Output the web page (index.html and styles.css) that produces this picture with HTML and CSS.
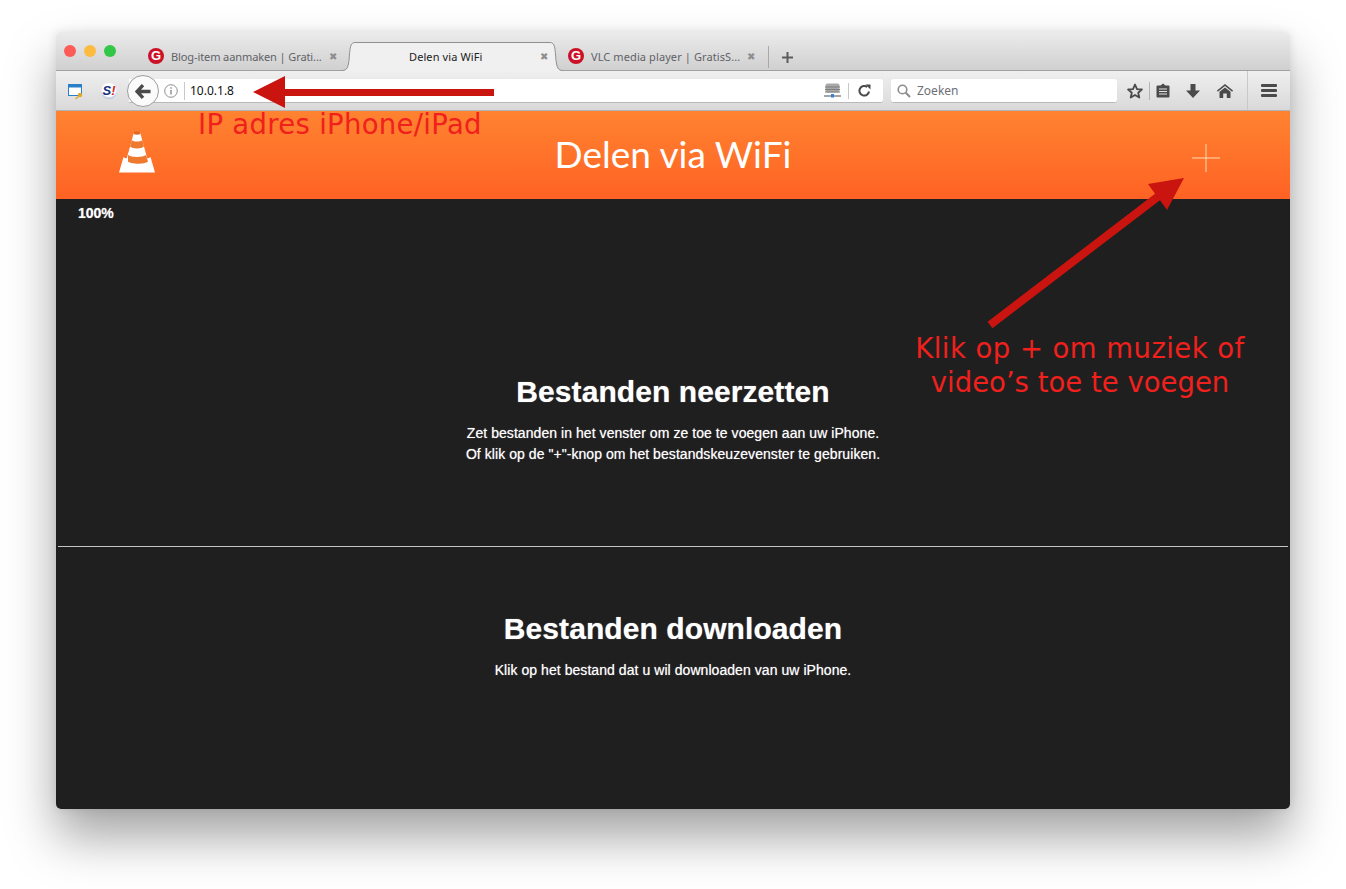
FILE: index.html
```html
<!DOCTYPE html>
<html lang="en">
<head>
  <meta charset="UTF-8">
  <meta name="viewport" content="width=device-width, initial-scale=1.0">
  <title>Delen via WiFi</title>
  <link rel="stylesheet" href="styles.css">
</head>
<body>
  <div class="window">
    <!-- Tabs -->
    <div class="tabbar">
      <div class="traffic">
        <span class="dot red"></span>
        <span class="dot yellow"></span>
        <span class="dot green"></span>
      </div>
      <div class="tab first">
        <span class="favicon">G</span>
        <span class="tab-title">Blog-item aanmaken | Grati...</span>
        <span class="tab-close">&#10006;</span>
      </div>
      <div class="tab active">
        <svg class="tab-curve left" width="13" height="29" viewBox="0 0 13 29"><path d="M0 28.500c5 0 6-3 7-10C8 6 8 .5 13 .5V29H0z" fill="#f0f0f0"/><path d="M0 28.500c5 0 6-3 7-10C8 6 8 .5 13 .5" fill="none" stroke="#8f8f8f"/></svg>
        <span class="tab-title">Delen via WiFi</span>
        <span class="tab-close">&#10006;</span>
        <svg class="tab-curve right" width="13" height="29" viewBox="0 0 13 29"><path d="M13 28.500c-5 0-6-3-7-10C5 6 5 .5 0 .5V29h13z" fill="#f0f0f0"/><path d="M13 28.500c-5 0-6-3-7-10C5 6 5 .5 0 .5" fill="none" stroke="#8f8f8f"/></svg>
      </div>
      <div class="tab third">
        <span class="favicon">G</span>
        <span class="tab-title">VLC media player | GratisS...</span>
        <span class="tab-close">&#10006;</span>
      </div>
      <div class="tab-sep"></div>
      <svg class="new-tab" width="11" height="11" viewBox="0 0 11 11"><path d="M5.500 0v11M0 5.500h11" stroke="#5c5c5c" stroke-width="2"/></svg>
    </div>

    <!-- Navigation -->
    <div class="navbar">
      <svg class="addon" width="16" height="17" viewBox="0 0 16 17">
        <rect x=".5" y="1.500" width="13" height="11" fill="#fff" stroke="#2a7fc9"/>
        <rect x="1" y="2" width="12" height="2.500" fill="#2a7fc9"/>
        <circle cx="12" cy="12" r="2.200" fill="#e0a92e"/>
        <path d="M10.500 13.500L7.500 16" stroke="#e0a92e" stroke-width="1.500"/>
      </svg>
      <span class="addon-s">S<span class="bang">!</span></span>
      <div class="urlbar">
        <div class="back">
          <svg width="16" height="15" viewBox="0 0 16 15"><path d="M8 1.200L2 7.500l6 6.300M2.500 7.500H15.500" fill="none" stroke="#4a4a4a" stroke-width="3.400"/></svg>
        </div>
        <svg class="info" width="14" height="14" viewBox="0 0 14 14"><circle cx="7" cy="7" r="6.300" fill="none" stroke="#8e8e8e"/><path d="M7 6v4.500M7 3.300v1.500" stroke="#808080" stroke-width="1.300"/></svg>
        <span class="url-sep"></span>
        <span class="url-text">10.0.1.8</span>
        <svg class="server" width="17" height="15" viewBox="0 0 17 15">
          <rect x="1.500" y="0.500" width="14" height="9" rx="2" fill="#a9a9a9"/>
          <path d="M1 4h15M1 6.500h15M1 9h15" stroke="#7e7e7e"/>
          <path d="M0 13h17" stroke="#888" stroke-width="1.500"/>
          <rect x="7" y="11" width="3" height="3.500" fill="#3c7fd6"/>
        </svg>
        <span class="url-sep small"></span>
        <svg class="reload" width="13" height="13" viewBox="0 0 13 13"><path d="M11 7.500A4.800 4.800 0 1 1 9.200 3" fill="none" stroke="#4a4a4a" stroke-width="2"/><path d="M7.500 0.500h5v5z" fill="#4a4a4a"/></svg>
      </div>
      <div class="searchbar">
        <svg width="14" height="14" viewBox="0 0 14 14"><circle cx="5.500" cy="5.500" r="4.300" fill="none" stroke="#8c8c8c" stroke-width="1.600"/><path d="M8.800 8.800L13 13" stroke="#8c8c8c" stroke-width="2"/></svg>
        <span>Zoeken</span>
      </div>
      <div class="tools">
        <svg class="star" width="16" height="16" viewBox="0 0 16 16"><path d="M8 1.500l2 4.600 4.900.4-3.700 3.200 1.100 4.800L8 12l-4.300 2.500 1.100-4.800L1.100 6.500 6 6.100z" fill="none" stroke="#4a4a4a" stroke-width="1.800" stroke-linejoin="round"/></svg>
        <span class="tool-sep"></span>
        <svg class="clip" width="14" height="15" viewBox="0 0 14 15"><path d="M1.500 2.500h3L7 .5l2.500 2h3a1 1 0 0 1 1 1v10a1 1 0 0 1-1 1h-11a1 1 0 0 1-1-1v-10a1 1 0 0 1 1-1z" fill="#4a4a4a"/><path d="M3 6h8M3 8.500h8M3 11h8" stroke="#e3e3e3" stroke-width="1.200"/></svg>
        <svg class="down" width="14" height="14" viewBox="0 0 14 14"><path d="M4.500 0h5v6.500H14L7 14 0 6.500h4.500z" fill="#4a4a4a"/></svg>
        <svg class="home" width="16" height="14" viewBox="0 0 16 14"><path d="M8 0l8 6.500-.8 1.200L8 2 .8 7.700 0 6.500z" fill="#4a4a4a"/><path d="M8 3.500l5.500 4.300V14h-3.700V9.500H6.200V14H2.500V7.800z" fill="#4a4a4a"/></svg>
        <span class="menu-sep"></span>
        <div class="menu"><span></span><span></span><span></span></div>
      </div>
    </div>

    <!-- Page -->
    <div class="page-header">
      <svg class="cone" width="36" height="42" viewBox="0 0 36 42">
        <path d="M4.500 26c2 3 25 3 27 0L36 41.500H0z" fill="#fff"/>
        <path d="M15 1h6l8.500 31H6.500z" fill="#fff"/>
        <path d="M15 1Q18-.5 21 1l.5 2Q18 4.500 14.500 3z" fill="#e06a26"/>
        <path d="M12.800 9c2 2 8.400 2 10.400 0l1.800 6.500c-2.500 2.500-11.500 2.500-14 0z" fill="#ee7a30"/>
        <path d="M9 24c3 2.500 15 2.500 18 0l2 6.500c-3 3-17 3-20 0z" fill="#ee7a30"/>
      </svg>
      <h1>Delen via WiFi</h1>
      <svg class="plus" width="28" height="28" viewBox="0 0 28 28"><path d="M14 0v28M0 14h28" stroke="#ffdcb0" stroke-width="1"/></svg>
    </div>
    <div class="page-body">
      <div class="progress">100%</div>
      <section class="upload">
        <h2>Bestanden neerzetten</h2>
        <p>Zet bestanden in het venster om ze toe te voegen aan uw iPhone.<br>Of klik op de "+"-knop om het bestandskeuzevenster te gebruiken.</p>
      </section>
      <hr class="divider">
      <section class="download">
        <h2>Bestanden downloaden</h2>
        <p>Klik op het bestand dat u wil downloaden van uw iPhone.</p>
      </section>
    </div>

    <!-- Annotations drawn on top of the screenshot -->
    <svg class="arrows" width="1234" height="777" viewBox="0 0 1234 777">
      <path d="M438 57H229V44L197 60l32 16V64h209z" fill="#c9140f"/>
      <path d="M931.600 289.800L1099 161.800 1092 152l36-6-17 32-7-9.800L936.400 296.200z" fill="#c9140f"/>
    </svg>
    <div class="note note-ip">IP adres iPhone/iPad</div>
    <div class="note note-plus"><div class="line-one">Klik op + om muziek of</div><div>video’s toe te voegen</div></div>
  </div>
</body>
</html>
```

FILE: styles.css
```css
/* Page */
body {
  margin: 0;
  padding: 32px 56px 0;
  height: 889px;
  box-sizing: border-box;
  overflow: hidden;
  background-color: #ffffff;
  font-family: "Liberation Sans", Arial, sans-serif;
}

.window {
  position: relative;
  width: 1234px;
  height: 777px;
  display: flex;
  flex-direction: column;
  border-radius: 5px;
  box-shadow: 0 28px 50px rgba(0, 0, 0, 0.36), 0 0 10px rgba(0, 0, 0, 0.1);
}

/* Tabs */
.tabbar {
  height: 39px;
  padding-top: 10px;
  box-sizing: border-box;
  display: flex;
  align-items: stretch;
  background: linear-gradient(#ebebeb, #d0d0d0);
  border-bottom: 1px solid #a0a0a0;
  border-radius: 5px 5px 0 0;
  position: relative;
}

.traffic {
  position: absolute;
  left: 8px;
  top: 13px;
  display: flex;
  gap: 8px;
}

.dot {
  width: 12px;
  height: 12px;
  border-radius: 50%;
}

.dot.red { background-color: #fc5b57; }
.dot.yellow { background-color: #fdbb40; }
.dot.green { background-color: #33c748; }

.tab {
  display: flex;
  align-items: center;
  font-size: 11px;
  letter-spacing: -0.1px;
  color: #5f6268;
  font-family: "Noto Sans", "Open Sans", sans-serif;
  position: relative;
}

.tab.first {
  margin-left: 92px;
  width: 207px;
}

.tab.active {
  width: 195px;
  height: 29px;
  margin-right: 18px;
  padding-left: 54px;
  padding-bottom: 1px;
  box-sizing: border-box;
  color: #222222;
  letter-spacing: 0.1px;
  background-color: #f0f0f0;
  border-top: 1px solid #8f8f8f;
}

.tab.active .tab-close {
  position: absolute;
  right: 2px;
  top: 6px;
}

.tab.third {
  width: 200px;
  letter-spacing: 0.1px;
}

.tab-curve {
  position: absolute;
  top: -1px;
}

.tab-curve.left { left: -13px; }
.tab-curve.right { right: -13px; }

.favicon {
  width: 16px;
  height: 16px;
  border-radius: 50%;
  background-color: #cc1126;
  color: #ffffff;
  font: bold 13px/16px "Liberation Sans", Arial, sans-serif;
  text-align: center;
  margin-right: 7px;
  flex-shrink: 0;
}

.tab-title {
  white-space: nowrap;
}

.tab-close {
  font-size: 10px;
  color: #8e8e8e;
  margin-left: 7px;
}

.tab-sep {
  width: 1px;
  height: 22px;
  margin-top: 4px;
  background-color: #a9a9a9;
}

.new-tab {
  margin: 10px 0 0 13px;
}

/* Navigation */
.navbar {
  height: 40px;
  box-sizing: border-box;
  display: flex;
  align-items: center;
  background: linear-gradient(#efefef, #d9d9d9);
  border-bottom: 1px solid #b3b3b3;
  position: relative;
  padding-left: 12px;
}

.addon {
  margin-top: 1px;
}

.addon-s {
  margin-left: 17px;
  width: 16px;
  height: 16px;
  margin-top: 1px;
  border-radius: 50%;
  background: radial-gradient(circle at 50% 40%, #ffffff 55%, #4a6fb5);
  font: italic bold 13px/16px "Liberation Sans", Arial, sans-serif;
  color: #17317f;
  text-align: center;
}

.bang {
  color: #d9261c;
}

.urlbar {
  margin-left: 12px;
  margin-top: 1px;
  width: 754px;
  height: 24px;
  background-color: #ffffff;
  border-bottom: 1px solid #b9b9b9;
  border-radius: 0 3px 3px 0;
  box-sizing: border-box;
  display: flex;
  align-items: center;
  position: relative;
  padding-left: 35px;
}

.back {
  position: absolute;
  left: -2px;
  top: -4px;
  width: 32px;
  height: 32px;
  border-radius: 50%;
  background-color: #fbfbfb;
  border: 1px solid #9d9d9d;
  box-sizing: border-box;
  display: flex;
  align-items: center;
  justify-content: center;
}

.url-sep {
  width: 1px;
  height: 18px;
  margin: 0 5px 0 6px;
  background-color: #c9c9c9;
}

.url-text {
  font-size: 12px;
  font-family: "Noto Sans", "Open Sans", sans-serif;
  color: #111111;
  flex: 1;
}

.url-sep.small {
  height: 16px;
  margin: 0 9px 0 7px;
}

.reload {
  margin-right: 12px;
}

.searchbar {
  margin-left: 8px;
  margin-top: 1px;
  width: 226px;
  height: 24px;
  background-color: #ffffff;
  border-bottom: 1px solid #b9b9b9;
  border-radius: 3px;
  box-sizing: border-box;
  display: flex;
  align-items: center;
  gap: 6px;
  padding-left: 6px;
  font-family: "Noto Sans", "Open Sans", sans-serif;
  font-size: 12px;
  color: #6c6f76;
}

.tools {
  display: flex;
  align-items: center;
  height: 100%;
  margin-left: 10px;
}

.tool-sep {
  width: 1px;
  height: 18px;
  margin: 0 6px 0 6px;
  background-color: #b5b5b5;
}

.down { margin-left: 16px; }
.home { margin-left: 17px; }

.menu-sep {
  width: 1px;
  height: 39px;
  margin: 0 13px 0 14px;
  background-color: #c8c8c8;
}

.menu {
  width: 16px;
  display: flex;
  flex-direction: column;
  gap: 2px;
}

.menu span {
  height: 3px;
  border-radius: 1px;
  background-color: #4a4a4a;
}

/* Page header */
.page-header {
  height: 88px;
  flex-shrink: 0;
  position: relative;
  display: flex;
  align-items: center;
  justify-content: center;
  background: linear-gradient(#ff8330, #ff6224);
}

.page-header h1 {
  margin: -3px 0 0;
  font-family: Lato, "Open Sans", sans-serif;
  font-weight: 400;
  font-size: 37px;
  color: #ffffff;
}

.cone {
  position: absolute;
  left: 63px;
  top: 20px;
}

.plus {
  position: absolute;
  right: 70px;
  top: 33px;
}

/* Page body */
.page-body {
  flex: 1;
  background-color: #1f1f1f;
  color: #ffffff;
  text-align: center;
  border-radius: 0 0 5px 5px;
  display: flex;
  flex-direction: column;
  text-shadow: 0 0 1px rgba(255, 255, 255, 0.6);
}

.progress {
  text-align: left;
  padding: 6px 0 0 22px;
  font-size: 14px;
  font-weight: bold;
  height: 20px;
}

.upload {
  padding-top: 149px;
  height: 321px;
  box-sizing: border-box;
}

.download {
  padding-top: 64px;
}

.page-body h2 {
  margin: 0;
  font-size: 30px;
  line-height: 36px;
  font-weight: bold;
  letter-spacing: 0.08px;
}

.page-body p {
  margin: 13px 0 0;
  font-size: 14px;
  line-height: 21px;
  letter-spacing: 0.06px;
}

.divider {
  margin: 0 2px;
  border: 0;
  height: 1px;
  background-color: #c4c4c4;
}

/* Annotations */
.arrows {
  position: absolute;
  left: 0;
  top: 0;
  pointer-events: none;
}

.note {
  position: absolute;
  color: #f0201c;
  font-family: "DejaVu Sans", sans-serif;
  white-space: nowrap;
}

.note-ip {
  left: 142px;
  top: 76px;
  font-size: 27.500px;
  letter-spacing: 0.3px;
}

.note-plus {
  left: 824px;
  top: 299px;
  width: 400px;
  font-size: 27.500px;
  line-height: 34px;
  text-align: center;
}

.line-one {
  letter-spacing: 0.45px;
}
```
